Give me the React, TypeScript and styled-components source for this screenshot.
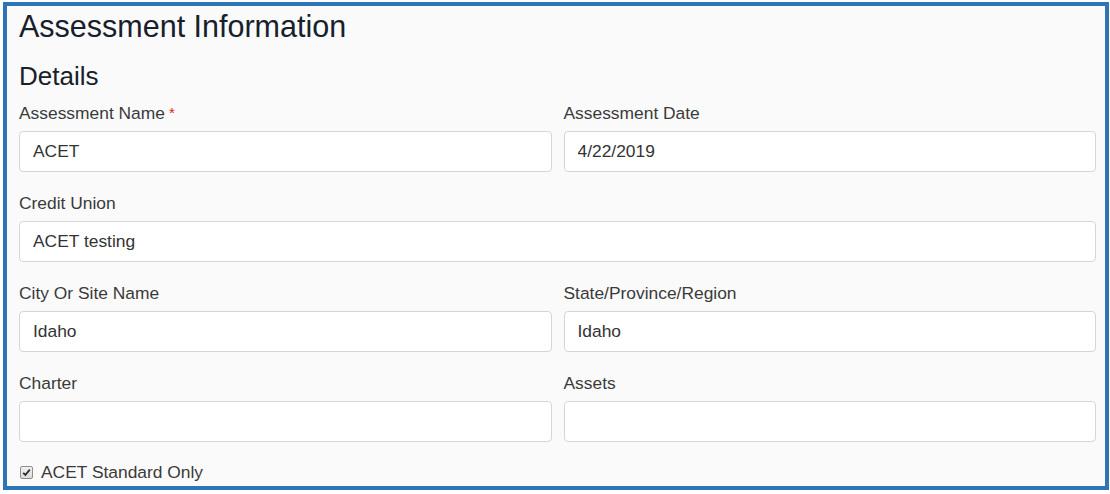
import React from "react";
import styled, { createGlobalStyle } from "styled-components";

const Global = createGlobalStyle`
  html, body { margin: 0; padding: 0; background: #ffffff; }
  body { font-family: "Liberation Sans", Arial, sans-serif; }
`;

const Frame = styled.div`
  box-sizing: border-box;
  margin: 2px 0 0 3px;
  width: 1106px;
  height: 488px;
  border: 4px solid #2e75b6;
  background: #fafafa;
  overflow: hidden;
  padding: 2px 9px 0 12px;
`;

const Title = styled.h1`
  margin: 0;
  font-size: 30.5px;
  line-height: 1.2;
  font-weight: 400;
  color: #17202b;
`;

const Subtitle = styled.h2`
  margin: 16px 0 8px;
  font-size: 26px;
  line-height: 1.2;
  font-weight: 400;
  color: #17202b;
`;

const FormGrid = styled.div`
  display: grid;
  grid-template-columns: 1fr 1fr;
  column-gap: 12px;
`;

const Group = styled.div<{ $full?: boolean }>`
  grid-column: ${(p) => (p.$full ? "1 / span 2" : "auto")};
  display: flex;
  flex-direction: column;
  margin-bottom: 18px;
`;

const Label = styled.label`
  font-size: 17.4px;
  line-height: 26px;
  color: #3a3a3a;
  margin-bottom: 5px;
`;

const Required = styled.span`
  color: #e02020;
  margin-left: 4px;
  font-size: 15px;
  vertical-align: top;
`;

const Input = styled.input`
  box-sizing: border-box;
  height: 41px;
  width: 100%;
  border: 1px solid #d3d7dc;
  border-radius: 4px;
  background: #ffffff;
  padding: 0 13px;
  font-family: "Liberation Sans", Arial, sans-serif;
  font-size: 17.4px;
  color: #333333;
  outline: none;
`;

const CheckRow = styled.label`
  display: flex;
  align-items: center;
  gap: 8px;
  font-size: 17.4px;
  line-height: 26px;
  color: #3a3a3a;
  padding-left: 1px;
  margin-top: -1px;
`;

const CheckBox = styled.span`
  box-sizing: border-box;
  width: 13px;
  height: 13px;
  border: 1px solid #8f8f8f;
  border-radius: 2px;
  background: linear-gradient(#f0f0f0, #dcdcdc);
  display: inline-flex;
  align-items: center;
  justify-content: center;
  margin-top: 1px;
`;

export default function App() {
  return (
    <>
      <Global />
      <Frame>
        <Title>Assessment Information</Title>
        <Subtitle>Details</Subtitle>
        <FormGrid>
          <Group>
            <Label>
              Assessment Name<Required>*</Required>
            </Label>
            <Input defaultValue="ACET" />
          </Group>
          <Group>
            <Label>Assessment Date</Label>
            <Input defaultValue="4/22/2019" />
          </Group>
          <Group $full>
            <Label>Credit Union</Label>
            <Input defaultValue="ACET testing" />
          </Group>
          <Group>
            <Label>City Or Site Name</Label>
            <Input defaultValue="Idaho" />
          </Group>
          <Group>
            <Label>State/Province/Region</Label>
            <Input defaultValue="Idaho" />
          </Group>
          <Group>
            <Label>Charter</Label>
            <Input defaultValue="" />
          </Group>
          <Group>
            <Label>Assets</Label>
            <Input defaultValue="" />
          </Group>
        </FormGrid>
        <CheckRow>
          <CheckBox>
            <svg width="9" height="9" viewBox="0 0 9 9">
              <path d="M1.2 4.8 L3.4 7 L7.8 1.6" fill="none" stroke="#2b2b2b" strokeWidth="1.8" />
            </svg>
          </CheckBox>
          ACET Standard Only
        </CheckRow>
      </Frame>
    </>
  );
}
